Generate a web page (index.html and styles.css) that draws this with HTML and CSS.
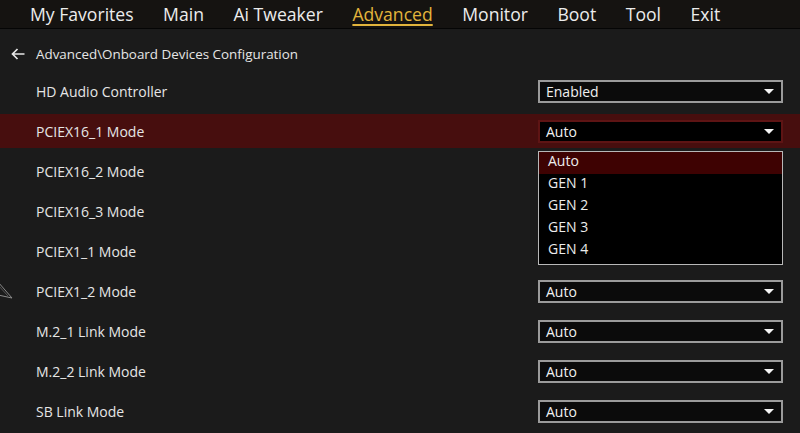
FILE: index.html
```html
<!DOCTYPE html>
<html>
<head>
<meta charset="utf-8">
<link rel="stylesheet" href="styles.css">
</head>
<body>
<nav class="tabs">
  <span class="tab">My Favorites</span>
  <span class="tab">Main</span>
  <span class="tab">Ai Tweaker</span>
  <span class="tab active">Advanced</span>
  <span class="tab">Monitor</span>
  <span class="tab">Boot</span>
  <span class="tab">Tool</span>
  <span class="tab">Exit</span>
</nav>
<div class="crumb">
  <svg class="back" width="14" height="12" viewBox="0 0 14 12"><path d="M13.5 6H1.5M6.5 1L1.5 6l5 5" fill="none" stroke="#e6e6e6" stroke-width="1.7"/></svg>
  <span>Advanced\Onboard Devices Configuration</span>
</div>
<svg class="decor" width="14" height="22" viewBox="0 0 14 22"><path d="M-2 2L12 18L-2 15" fill="none" stroke="#8a8a8a" stroke-width="1"/><path d="M-2 5L8 16" fill="none" stroke="#555" stroke-width="1"/></svg>
<div class="list">
  <div class="row"><span class="label">HD Audio Controller</span><div class="sel">Enabled<i class="arr"></i></div></div>
  <div class="row hl"><span class="label">PCIEX16_1 Mode</span><div class="sel sel-hl">Auto<i class="arr"></i></div>
    <ul class="drop">
      <li class="on">Auto</li>
      <li>GEN 1</li>
      <li>GEN 2</li>
      <li>GEN 3</li>
      <li>GEN 4</li>
    </ul>
  </div>
  <div class="row"><span class="label">PCIEX16_2 Mode</span></div>
  <div class="row"><span class="label">PCIEX16_3 Mode</span></div>
  <div class="row"><span class="label">PCIEX1_1 Mode</span></div>
  <div class="row"><span class="label">PCIEX1_2 Mode</span><div class="sel">Auto<i class="arr"></i></div></div>
  <div class="row"><span class="label">M.2_1 Link Mode</span><div class="sel">Auto<i class="arr"></i></div></div>
  <div class="row"><span class="label">M.2_2 Link Mode</span><div class="sel">Auto<i class="arr"></i></div></div>
  <div class="row"><span class="label">SB Link Mode</span><div class="sel">Auto<i class="arr"></i></div></div>
</div>
</body>
</html>
```
FILE: styles.css
```css
* { box-sizing: border-box; }
html, body { margin: 0; padding: 0; }
body {
  background: #1b1b1b;
  color: #e6e6e6;
  font-family: "Open Sans", "Noto Sans", sans-serif;
  width: 800px;
  height: 433px;
  overflow: hidden;
  position: relative;
}
.tabs {
  height: 29px;
  background: #151311;
  border-bottom: 1px solid #050505;
  display: flex;
  align-items: center;
  padding-left: 30px;
  gap: 29.5px;
}
.tab {
  font-size: 17.6px;
  line-height: 28px;
  color: #ececec;
}
.tab.active {
  color: #e2b43c;
  text-decoration: underline;
  text-decoration-thickness: 2px;
  text-underline-offset: 3px;
}
.crumb {
  height: 45px;
  padding-top: 5px;
  display: flex;
  align-items: center;
  padding-left: 11px;
  gap: 11px;
  font-size: 13.4px;
}
.back { display: block; }
.decor { position: absolute; left: 0; top: 280px; }
.list {
  display: flex;
  flex-direction: column;
  gap: 6px;
}
.row {
  height: 34px;
  display: flex;
  align-items: center;
  justify-content: space-between;
  padding-left: 36px;
  padding-right: 17px;
  position: relative;
  font-size: 14px;
}
.row.hl {
  background: #470e0e;
}
.sel {
  width: 245px;
  height: 23px;
  border: 2px solid #9b9b9b;
  background: #0b0b0b;
  display: flex;
  align-items: center;
  justify-content: space-between;
  padding: 0 7px 0 6px;
  font-size: 14px;
  color: #f0f0f0;
}
.sel-hl {
  border-color: #5e1414;
  background: #000;
}
.arr {
  width: 0;
  height: 0;
  border-left: 5px solid transparent;
  border-right: 5px solid transparent;
  border-top: 5px solid #f4f4f4;
}
.drop {
  position: absolute;
  top: 37px;
  right: 17px;
  width: 245px;
  margin: 0;
  padding: 0;
  list-style: none;
  background: #000;
  border: 1px solid #b8b8b8;
  padding-bottom: 2px;
}
.drop li {
  height: 22px;
  line-height: 18px;
  padding-left: 9px;
  font-size: 14px;
  color: #ececec;
}
.drop li.on { background: #3e0202; }
```
